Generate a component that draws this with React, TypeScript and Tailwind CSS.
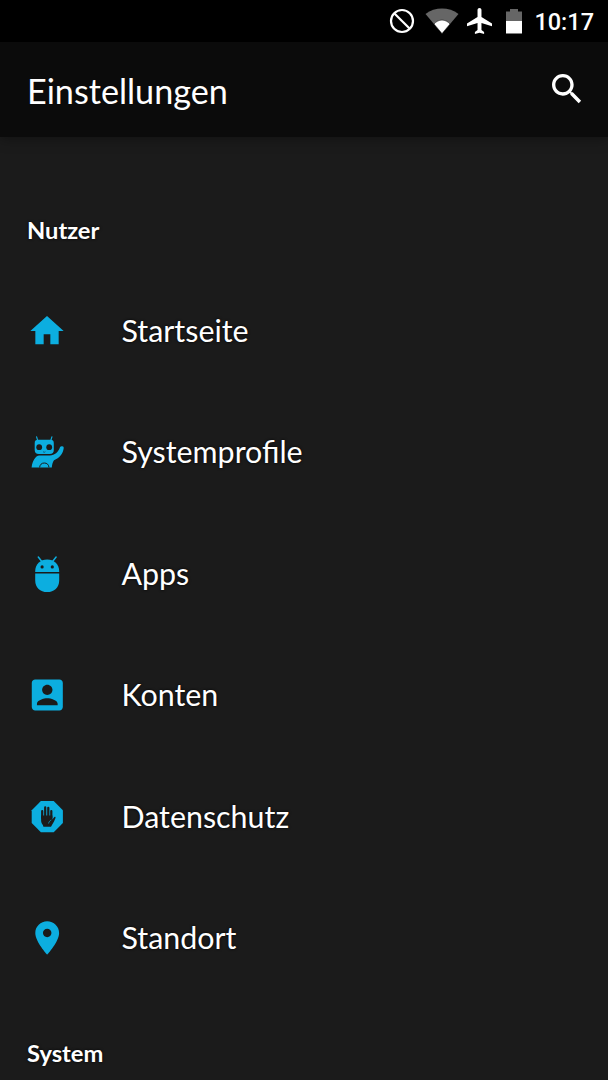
import * as React from 'react';

type Item = {
  label: string;
  icon: React.ReactNode;
};

const BG = '#1b1b1b';

const USER_ITEMS: Item[] = [
  {
    label: 'Startseite',
    icon: <path transform="scale(1.6667)" d="M10 20v-6h4v6h5v-8h3L12 3 2 12h3v8z" />,
  },
  {
    label: 'Systemprofile',
    icon: (
      <>
        <path d="M9.600 4.800l1.200 4M24.900 4.800l-1.200 4" stroke="currentColor" strokeWidth="1.200" strokeLinecap="round" />
        <path d="M11.200 7.800h12.100c2.500 0 3.500 1 3.500 3.400v6.700c0 2.600-1.400 4-4 4H11.700c-2.600 0-4-1.400-4-4v-6.700c0-2.400 1-3.400 3.500-3.400z" />
        <path d="M34.700 14.200c1.400-.3 2.200.6 2 2-.8 5.600-4.200 9.800-9.700 12-1.300 2-2 4.200-2.200 7.300H4.600c.4-4.200 1.700-7.400 4.400-10.500 1.200-1.200 2.600-1.600 4.600-1.600h9.300c4.800 0 8.300-3 10.200-8.300.4-.5.900-.8 1.600-.9z" />
        <circle cx="12.200" cy="15.200" r="2.900" fill={BG} />
        <circle cx="22.200" cy="15.200" r="2.900" fill={BG} />
        <path d="M16 19.700l1.200.6 1.200-.6" fill="none" stroke={BG} strokeWidth=".5" />
        <path d="M12.600 35.500c.3-2.900 2-4.500 4.700-4.500s4.400 1.600 4.700 4.500" fill="none" stroke={BG} strokeWidth="1" />
      </>
    ),
  },
  {
    label: 'Apps',
    icon: (
      <>
        <path d="M11.300 3l3.700 4.800M29.100 3l-3.700 4.800" stroke="currentColor" strokeWidth="1.500" strokeLinecap="round" />
        <path d="M8.200 18.100v-.8c0-7 5-11.800 12-11.800s12 4.800 12 11.800v.8z" />
        <path d="M8.200 19.600h24v6.800c0 7-5 11.700-12 11.700s-12-4.700-12-11.700z" />
        <circle cx="15.100" cy="12.900" r="1.600" fill={BG} />
        <circle cx="25.300" cy="12.900" r="1.600" fill={BG} />
      </>
    ),
  },
  {
    label: 'Konten',
    icon: (
      <path
        transform="translate(-.4 -.7) scale(1.725)"
        d="M3 5v14c0 1.100.89 2 2 2h14c1.100 0 2-.9 2-2V5c0-1.100-.9-2-2-2H5c-1.110 0-2 .9-2 2zm12 4c0 1.660-1.340 3-3 3s-3-1.340-3-3 1.340-3 3-3 3 1.340 3 3zm-9 8c0-2 4-3.100 6-3.100s6 1.100 6 3.100v1H6v-1z"
      />
    ),
  },
  {
    label: 'Datenschutz',
    icon: (
      <>
        <path d="M13.900 4h12.800l9.200 9.200V26l-9.200 9.200H13.900L4.700 26V13.200z" />
        <g fill="none" stroke={BG} strokeWidth="2.200" strokeLinecap="round">
          <path d="M15.200 21v-7M18.200 20v-9.600M21.300 20v-9.200M24.300 21v-7" />
        </g>
        <path
          fill={BG}
          d="M14.100 18.500h11.300v3.900l1.500-2c.7-.9 1.900-.6 1.600.5-.8 2.500-2 4.800-3.500 7l-1 1.800h-7.600l-.5-1.800c-1.300-1.500-1.800-2.800-1.800-5z"
        />
        <path d="M21.600 26.500c.3-1.800 1.200-2.800 2.700-3.500" fill="none" stroke="currentColor" strokeWidth=".7" />
      </>
    ),
  },
  {
    label: 'Standort',
    icon: (
      <path
        transform="translate(-.2 0) scale(1.7 1.6667)"
        d="M12 2C8.130 2 5 5.130 5 9c0 5.250 7 13 7 13s7-7.750 7-13c0-3.870-3.130-7-7-7zm0 9.500c-1.380 0-2.500-1.120-2.500-2.500s1.120-2.500 2.500-2.500 2.500 1.120 2.500 2.500-1.120 2.500-2.500 2.500z"
      />
    ),
  },
];

function StatusBar() {
  return (
    <div className="flex h-[42px] shrink-0 items-center justify-end bg-black pr-3.5 text-white">
      <svg className="mr-2.5 size-[26px]" viewBox="0 0 26 26" fill="none" stroke="currentColor" strokeWidth="2.200">
        <circle cx="13" cy="13" r="11" />
        <path d="M5.200 5.200l15.600 15.600" />
      </svg>
      <svg className="mr-2 h-[26px] w-[34px]" viewBox="0 0 34 26">
        <path d="M.5 6C10-1.300 24-1.300 33.500 6L17 25.500z" fill="#666" />
        <path d="M9 16c4.600-5.200 11.400-5.200 16 0l-8 9.500z" fill="#fff" stroke="#000" strokeWidth=".5" />
      </svg>
      <svg className="mr-3.5 h-[26px] w-[25px]" viewBox="2 2 19 20" preserveAspectRatio="none" fill="currentColor">
        <path d="M21 16v-2l-8-5V3.500c0-.83-.67-1.500-1.500-1.500S10 2.670 10 3.500V9l-8 5v2l8-2.500V19l-2 1.500V22l3.500-1 3.500 1v-1.500L13 19v-5.500l8 2.500z" />
      </svg>
      <svg className="mr-3 h-[26px] w-4" viewBox="0 0 16 26">
        <path d="M0 3.500h4V1h8v2.500h4V13H0z" fill="#666" />
        <path d="M0 13h16v12.500H0z" fill="#fff" />
      </svg>
      <span className="pt-1 font-[Roboto] text-[23.500px] leading-none font-medium">10:17</span>
    </div>
  );
}

function SectionTitle({ children }: { children: React.ReactNode }) {
  return (
    <h2 className="px-[27px] text-[23.700px] leading-8 font-bold [text-shadow:0_0_3px_#000]">{children}</h2>
  );
}

function SettingsRow({ label, icon }: Item) {
  return (
    <li className="flex h-[121.500px] items-center pl-[27px]">
      <svg className="size-10 shrink-0 text-[#0caee0]" viewBox="0 0 40 40" fill="currentColor">
        {icon}
      </svg>
      <span className="ml-[54.500px] pb-0.5 text-[30.400px] leading-10 [text-shadow:0_0_3px_#000]">{label}</span>
    </li>
  );
}

export default function App() {
  return (
    <div className="flex h-[1080px] w-[608px] flex-col overflow-hidden bg-[#1b1b1b] font-[Lato,sans-serif] text-white">
      <StatusBar />
      <header className="flex h-[95px] shrink-0 items-center justify-between bg-[#0b0b0b] pr-[21px] pl-[27px] shadow-[0_2px_12px_rgba(0,0,0,0.35)]">
        <h1 className="pt-0.5 text-[34.200px] leading-10">Einstellungen</h1>
        <svg className="mb-px size-10" viewBox="0 0 24 24" fill="currentColor">
          <path d="M15.500 14h-.79l-.28-.27C15.410 12.590 16 11.110 16 9.500 16 5.910 13.090 3 9.500 3S3 5.910 3 9.500 5.910 16 9.500 16c1.610 0 3.090-.59 4.230-1.570l.27.28v.79l5 4.990L20.490 19l-4.990-5zm-6 0C7.010 14 5 11.990 5 9.500S7.010 5 9.500 5 14 7.010 14 9.500 11.990 14 9.500 14z" />
        </svg>
      </header>
      <main className="flex shrink-0 flex-col pt-[77px]">
        <SectionTitle>Nutzer</SectionTitle>
        <ul className="mt-6">
          {USER_ITEMS.map((item) => (
            <SettingsRow key={item.label} {...item} />
          ))}
        </ul>
        <div className="mt-[38px]">
          <SectionTitle>System</SectionTitle>
        </div>
      </main>
    </div>
  );
}
